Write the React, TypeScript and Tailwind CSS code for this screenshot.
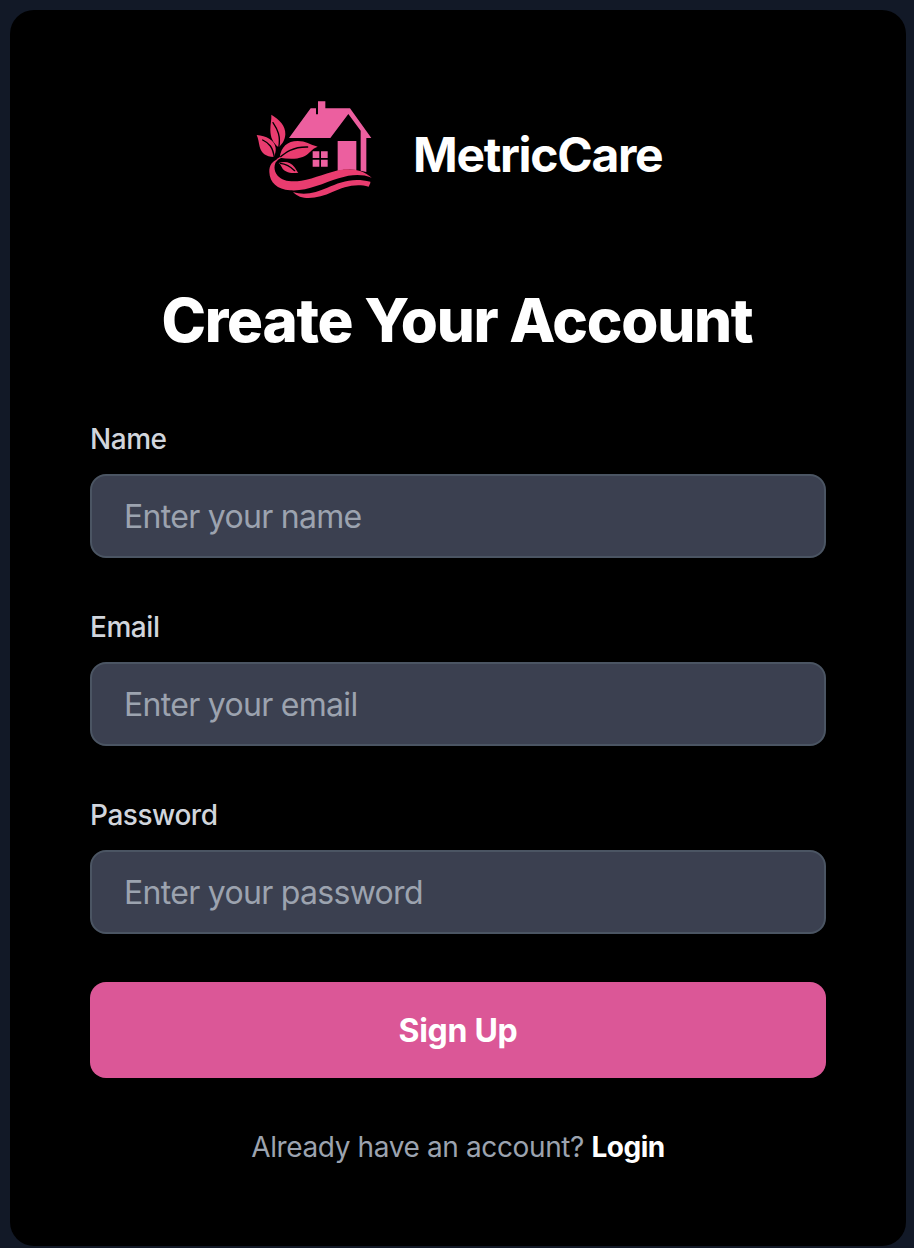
import React from "react";

function Logo() {
  return (
    <svg viewBox="0 0 420 360" className="h-[120px] w-[140px] shrink-0" aria-hidden="true">
      <g fill="#ec5f9f">
        <path d="M132 144 197 55H213V73H219V34H241V55H315L379 144H364V246L347 242V122L310 72L256 144Z" />
        <path d="M278 153H334V240Q306 236 278 243Z" />
        <path d="M203 184H223V204H203ZM228 184H248V204H228ZM203 209H223V230H203ZM228 209H248V230H228Z" />
      </g>
      <g fill="#e93c6f">
        <path d="M79 74C104 89 122 107 121 133C120 150 112 162 101 172C84 158 76 143 76 119C76 103 80 88 79 74Z" />
        <path d="M35 135C63 138 89 149 92 174C93 184 90 194 87 201C62 199 49 190 44 170C41 157 40 146 35 135Z" />
        <path d="M104 203C108 171 127 153 158 153C182 153 195 164 218 170C199 176 193 193 173 201C151 209 128 207 104 203Z" />
        <path d="M101 219C121 213 137 217 148 231C153 237 155 244 160 248C137 251 117 247 110 231C107 226 105 221 101 219Z" />
        <path d="M97 210C86 222 85 242 98 257C112 273 139 277 169 272C209 266 251 244 292 239C328 235 357 243 380 263C348 251 317 254 281 265C233 280 184 305 135 301C97 298 74 278 73 246C72 226 84 211 97 210Z" />
        <path d="M144 306C181 318 214 307 247 293C284 277 323 261 376 275V279L371 290C330 279 295 292 262 306C221 325 170 335 144 306Z" />
      </g>
      <g fill="none" stroke="#000" strokeWidth="4" strokeLinecap="round">
        <path d="M84 98C98 119 108 138 101 174" />
        <path d="M53 150C72 159 84 171 88 204" />
        <path d="M101 205C121 188 143 170 188 171" />
        <path d="M106 220C125 222 138 231 149 242" />
      </g>
      <path d="M92 214Q98 206 107 202" fill="none" stroke="#e93c6f" strokeWidth="4" />
    </svg>
  );
}

function Field({ label, type, placeholder }: { label: string; type: string; placeholder: string }) {
  return (
    <label className="block">
      <span className="block pt-px pb-[15px] text-[28px] leading-10 font-medium tracking-[-0.45px] text-gray-300">{label}</span>
      <input
        type={type}
        placeholder={placeholder}
        className="block h-[84px] w-full rounded-2xl border-2 border-[#4b5563] bg-[#3b4050] px-8 text-[32px] leading-[48px] tracking-[-0.7px] text-white outline-none placeholder:text-[#9ca3af]"
      />
    </label>
  );
}

export default function App() {
  return (
    <main className="h-[1248px] w-[914px] overflow-hidden bg-[#121927] pt-[10px] pl-[10px] font-['Inter',sans-serif]">
      <section className="h-[1236px] w-[896px] rounded-[24px] bg-black px-20 pt-20">
        <div className="flex h-[120px] items-center gap-[28px] pl-[155px]">
          <Logo />
          <span className="mt-[10px] text-5xl leading-[56px] font-bold tracking-[-1.3px] whitespace-nowrap text-white">MetricCare</span>
        </div>
        <h1 className="mt-[74px] pr-[2px] text-center text-[60px] leading-[72px] font-extrabold tracking-[-1.25px] whitespace-nowrap text-white">
          Create Your Account
        </h1>
        <form className="mt-[62px] flex flex-col gap-12" onSubmit={(e) => e.preventDefault()}>
          <Field label="Name" type="text" placeholder="Enter your name" />
          <Field label="Email" type="email" placeholder="Enter your email" />
          <Field label="Password" type="password" placeholder="Enter your password" />
          <button className="h-24 rounded-2xl bg-[#db5797] pt-[2px] text-[32px] leading-[48px] font-bold tracking-[-0.3px] text-white">
            Sign Up
          </button>
        </form>
        <p className="mt-[49px] text-center text-[28px] leading-10 tracking-[-0.38px] text-[#9ca3af]">
          Already have an account? <a href="#login" className="font-bold tracking-[-0.5px] text-white">Login</a>
        </p>
      </section>
    </main>
  );
}
